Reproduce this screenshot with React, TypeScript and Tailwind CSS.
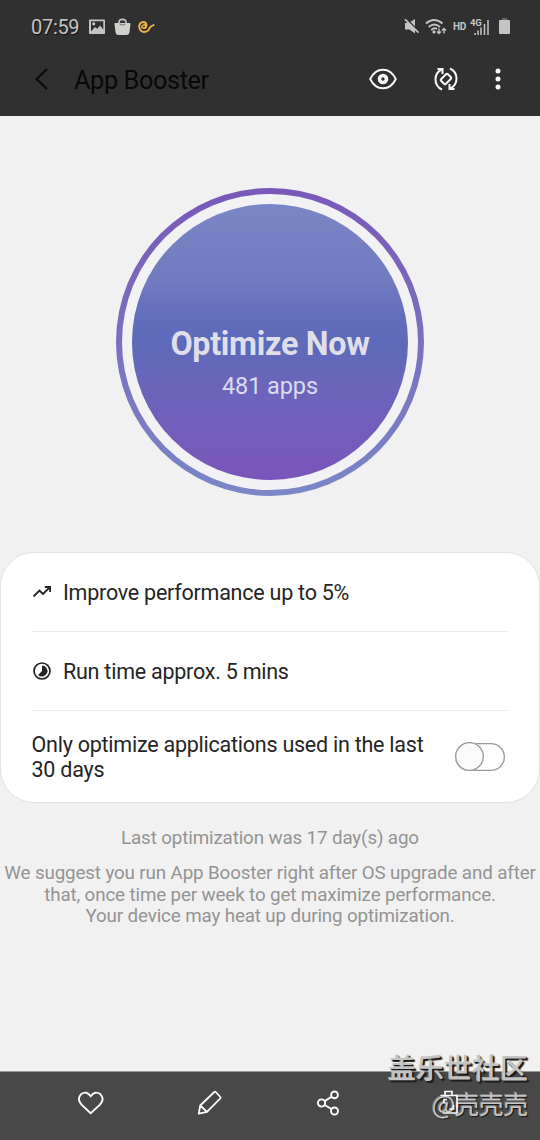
import React from 'react';

function StatusBar() {
  return (
    <div className="flex h-[53px] shrink-0 items-center justify-between pl-[31px] pr-[30px] text-[#c4c4c4]">
      <div className="flex items-center">
        <span className="w-[48px] whitespace-nowrap pt-px text-[20px] leading-[54px] tracking-[-0.3px] [text-shadow:1px_1px_1px_#111]">07:59</span>
        <svg className="ml-[10px]" width="16" height="16" viewBox="0 0 16 16">
          <path fillRule="evenodd" fill="currentColor" d="M1 0.500h14a1 1 0 0 1 1 1v12.500a1 1 0 0 1-1 1H1a1 1 0 0 1-1-1V1.500a1 1 0 0 1 1-1zM2 2.300v10.200l4-4.500 2.300 1.800L11 6.500l3.300 4V2.300zM4.700 3.200a1.600 1.600 0 1 1 0 3.200a1.600 1.600 0 0 1 0-3.200z" />
        </svg>
        <svg className="ml-[9px]" width="17" height="18" viewBox="0 0 17 18">
          <path d="M5 6V4.500Q5 1.300 8.500 1.300T12 4.500V6" fill="none" stroke="currentColor" strokeWidth="1.700" />
          <path d="M1.500 5h14a1 1 0 0 1 1 1.100L15.500 14q-.4 3-3 3H4.500q-2.600 0-3-3L.5 6.100a1 1 0 0 1 1-1.100z" fill="#d0d0cc" />
          <path d="M5.500 6q3 2.200 6 0" fill="none" stroke="#707070" strokeWidth="1" />
        </svg>
        <svg className="ml-[7px]" width="17" height="14" viewBox="0 0 17 14">
          <path d="M5.800 8Q8 8 7.800 6.100Q7.400 4.700 5.800 4.900Q3.600 5.500 3.900 7.900" fill="none" stroke="#edb64d" strokeWidth="1.500" strokeLinecap="round" />
          <path d="M5.800 8Q8.200 8.300 8.500 5.500Q8.300 2.200 5.500 2.100Q1.400 2.400 1.200 6.500Q1.600 11.600 6 12Q10.400 11.800 11.800 7.700Q13.300 5.800 15.600 5.100" fill="none" stroke="#edb64d" strokeWidth="2" strokeLinecap="round" />
        </svg>
      </div>
      <div className="flex items-center">
        <svg width="16" height="17" viewBox="0 0 16 17">
          <path d="M1 5h3.500L11 1v14.500L5.500 11.500H1z" fill="currentColor" />
          <path d="M1 -.5L16 14.500" stroke="#303030" strokeWidth="1.600" />
          <path d="M1 1.300L14.500 14.700" stroke="currentColor" strokeWidth="1.700" />
        </svg>
        <svg className="ml-[5px]" width="22" height="18" viewBox="0 0 22 18" fill="none" stroke="currentColor" strokeWidth="1.900">
          <path d="M1 5.500Q9 -1.500 17.500 5.500M3.700 9Q9.300 4 15 9M6.200 12Q9.300 9.300 12 11" />
          <path d="M9 12l2 2-2 2-2-2z" fill="currentColor" stroke="none" />
          <path d="M14 10.500v5M12 13.500l2 2 2-2M19 15.500v-5M17 12.500l2-2 2 2" strokeWidth="1.400" />
        </svg>
        <span className="ml-[6px] w-[13px] text-[10px] font-bold leading-none tracking-[-0.3px]">HD</span>
        <svg className="ml-[4px]" width="19" height="18" viewBox="0 0 19 18">
          <text x="0" y="8" fontSize="9.500" fontWeight="700" fill="currentColor" letterSpacing="-0.300">4G</text>
          <path d="M5 15v2M8 12.500v4.500M11 9.500v7.500M14.500 6v11M18 2v15" stroke="currentColor" strokeWidth="1.500" />
        </svg>
        <svg className="ml-[10px]" width="11" height="18" viewBox="0 0 11 18">
          <path d="M3 0h5v3H3z" fill="#666" />
          <rect y="2" width="11" height="14" rx="1" fill="#c4c4c4" />
        </svg>
      </div>
    </div>
  );
}

function Toolbar() {
  return (
    <div className="flex h-[63px] shrink-0 items-center pb-[11px] pl-[34px] pr-[39px] text-[#f8f8f8]">
      <svg width="15" height="22" viewBox="0 0 15 22" fill="none" stroke="#080808" strokeWidth="2">
        <path d="M13 1L2.500 11 13 21" />
      </svg>
      <h1 className="ml-[25px] whitespace-nowrap pt-[3px] text-[25.300px] leading-[30px] tracking-[-0.400px] text-[#080808]">App Booster</h1>
      <div className="ml-auto flex items-center">
        <svg width="28" height="22" viewBox="0 0 28 22" fill="none" stroke="currentColor" strokeWidth="1.900">
          <path d="M1.200 11C4.500 4 9 1.700 14 1.700S23.500 4 26.800 11C23.500 18 19 20.300 14 20.300S4.500 18 1.200 11z" />
          <circle cx="14" cy="11" r="3.500" strokeWidth="3.600" />
        </svg>
        <svg className="ml-[37px]" width="24" height="24" viewBox="0 0 24 24" fill="none" stroke="currentColor" strokeWidth="2">
          <path d="M8 22.500Q1.500 19.500 1.500 12.200Q1.700 5.500 7.500 2.500M3.500 2h5v5M16 1.500Q22.500 4.500 22.500 11.800Q22.300 18.500 16.500 21.500M20.500 22h-5v-5" />
          <rect x="8.700" y="7.300" width="6.600" height="9.400" rx="1" transform="rotate(45 12 12)" />
        </svg>
        <svg className="ml-[37px]" width="6" height="22" viewBox="0 0 6 22" fill="currentColor">
          <circle cx="3" cy="3" r="2.500" />
          <circle cx="3" cy="11" r="2.500" />
          <circle cx="3" cy="19" r="2.500" />
        </svg>
      </div>
    </div>
  );
}

function OptimizeButton() {
  return (
    <button className="mx-auto mt-[72px] block size-[308px] shrink-0 rounded-full bg-linear-to-b from-[#7958b8] to-[#7a87c6] p-[6px]">
      <span className="block size-full rounded-full bg-[#f2f2f4] p-[10px]">
        <span className="flex size-full flex-col items-center rounded-full bg-[linear-gradient(#7b86c7_0%,#717cbf_27%,#6571bf_37%,#5c6ab9_50%,#6767bb_61%,#7160bb_78%,#7957ba_96%)] pt-[120px]">
          <span className="whitespace-nowrap text-[32.300px] font-bold leading-[40px] tracking-[-0.300px] text-[#dedfe9]">Optimize Now</span>
          <span className="mt-[7px] whitespace-nowrap text-[23.500px] leading-[30px] tracking-[-0.100px] text-[#dadbee]">481 apps</span>
        </span>
      </span>
    </button>
  );
}

function OptionsCard() {
  return (
    <section className="mt-[56px] h-[251px] shrink-0 rounded-[34px] border border-[#e2e2e2] bg-white px-[31px] text-[21.500px] tracking-[-0.240px] text-[#252525]">
      <div className="flex h-[79px] items-center border-b border-[#ebebeb]">
        <svg width="20" height="14" viewBox="0 0 20 14" fill="none" stroke="currentColor" strokeWidth="1.800">
          <path d="M1.500 11.500L7.500 5.500 11 9 17.500 2.500M12.800 2h5.300v5" />
        </svg>
        <span className="ml-[11px] whitespace-nowrap pt-[2px]">Improve performance up to 5%</span>
      </div>
      <div className="flex h-[79px] items-center border-b border-[#ebebeb]">
        <svg width="20" height="20" viewBox="0 0 20 20">
          <circle cx="10" cy="10" r="8" fill="none" stroke="currentColor" strokeWidth="1.700" />
          <path d="M10 4.500a5.500 5.500 0 1 1-3.900 9.400L10 10z" fill="currentColor" />
        </svg>
        <span className="ml-[11px] whitespace-nowrap pt-[3px]">Run time approx. 5 mins</span>
      </div>
      <div className="flex h-[91px] items-center justify-between pr-[3px]">
        <p className="-ml-[0.500px] pt-[2px] whitespace-nowrap leading-[24.500px]">Only optimize applications used in the last<br />30 days</p>
        <span className="flex h-[28px] w-[50px] items-center rounded-full shadow-[inset_0_0_0_1.300px_#999]">
          <span className="size-[29px] shrink-0 rounded-full bg-[#fafafa] shadow-[inset_0_0_0_1.300px_#999]" />
        </span>
      </div>
    </section>
  );
}

function BottomBar() {
  return (
    <footer className="relative flex h-[69px] shrink-0 items-start border-t border-[#999] bg-[#484848] pl-[77px] pt-[17px] text-[#fafafa]">
      <svg width="28" height="28" viewBox="0 0 28 28" fill="none" stroke="currentColor" strokeWidth="1.900">
        <path d="M13.700 24.300L4.500 15.600Q-.5 10 4 5.300Q9.500 1.200 13.700 7.200Q18 1.200 23.500 5.300Q28 10 23 15.600z" />
      </svg>
      <svg className="ml-[91px]" width="28" height="28" viewBox="0 0 28 28" fill="none" stroke="currentColor" strokeWidth="1.800" strokeLinejoin="round">
        <path d="M2.800 24.700L4.200 16.500 18.300 3Q19 2.500 19.700 3L24.400 8Q24.900 8.700 24.300 9.400L11 22.800zM4.200 16.500L11 22.800" />
      </svg>
      <svg className="ml-[91px]" width="28" height="28" viewBox="0 0 28 28" fill="none" stroke="currentColor" strokeWidth="1.900">
        <circle cx="6.500" cy="14" r="3.600" />
        <circle cx="19.500" cy="5.900" r="3.400" />
        <circle cx="19.500" cy="22" r="3.500" />
        <path d="M9.600 12.100l7-4.400M9.500 16l7.100 4" />
      </svg>
      <div className="absolute right-[12px] top-[-24px] flex flex-col items-end whitespace-nowrap font-['Noto_Sans_CJK_SC',sans-serif] text-[#c4c4c4] [text-shadow:-1px_-1px_0_#eeeeee99,1px_1px_1px_#161616,2px_2px_1px_#222]">
        <span className="text-[28px] font-medium leading-[38px]">盖乐世社区</span>
        <span className="mt-px flex items-center text-[24.500px] leading-[33px] [text-shadow:-1px_-1px_0_#eeeeee55,1px_1px_1px_#161616]"><span className="text-[25px] tracking-[-1px]">@</span>壳壳壳</span>
      </div>
      <svg className="relative ml-[96px]" width="20" height="28" viewBox="0 0 20 28" fill="none" stroke="currentColor" strokeWidth="1.700">
        <path d="M1.500 6.500h17M18 6.500v17.500H3.500M6 6V2.500h7V6M5 14v-3.500h3M14.500 16v4h-4" />
      </svg>
    </footer>
  );
}

export default function App() {
  return (
    <div className="flex h-[1140px] w-[540px] flex-col overflow-hidden bg-[#f1f1f1] font-[Roboto,sans-serif]">
      <header className="h-[116px] shrink-0 bg-[#303030]">
        <StatusBar />
        <Toolbar />
      </header>
      <main className="flex h-[955px] shrink-0 flex-col">
        <OptimizeButton />
        <OptionsCard />
        <div className="mt-[24px] text-center text-[18.800px] leading-[22px] tracking-[-0.135px] text-[#949494]">
          <p className="whitespace-nowrap">Last optimization was 17 day(s) ago</p>
          <p className="mt-[14px] whitespace-nowrap leading-[21.500px]">
            We suggest you run App Booster right after OS upgrade and after<br />
            that, once time per week to get maximize performance.<br />
            Your device may heat up during optimization.
          </p>
        </div>
      </main>
      <BottomBar />
    </div>
  );
}
